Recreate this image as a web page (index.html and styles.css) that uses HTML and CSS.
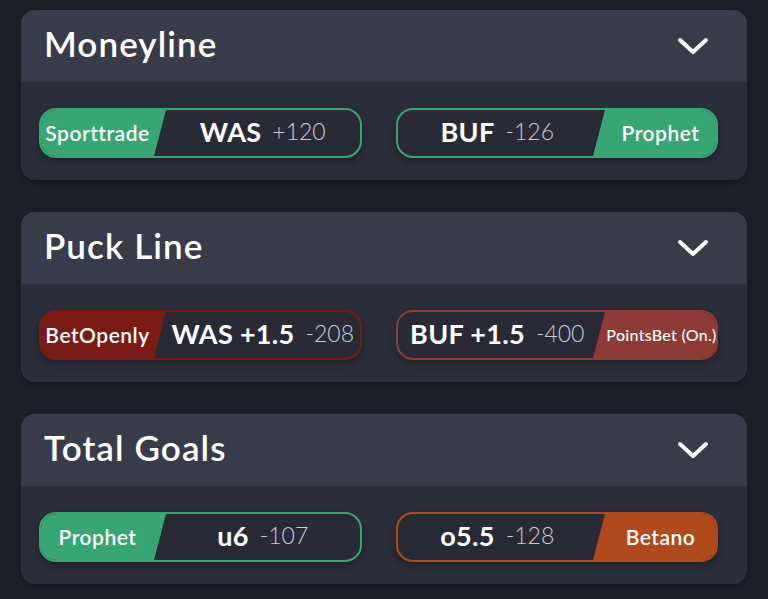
FILE: index.html
```html
<!DOCTYPE html>
<html lang="en">
<head>
    <meta charset="UTF-8">
    <meta name="viewport" content="width=device-width, initial-scale=1.0">
    <title>Markets</title>
    <link rel="stylesheet" href="styles.css">
</head>
<body>
    <div class="market">
        <div class="market-header">
            <h2>Moneyline</h2>
            <svg class="chevron" viewBox="0 0 32 18"><polyline points="3,3 16,15 29,3"/></svg>
        </div>
        <div class="market-body">
            <div class="bet left green">
                <div class="book">Sporttrade</div>
                <div class="line"><b>WAS</b><span>+120</span></div>
            </div>
            <div class="bet right green">
                <div class="line"><b>BUF</b><span>-126</span></div>
                <div class="book">Prophet</div>
            </div>
        </div>
    </div>

    <div class="market">
        <div class="market-header">
            <h2>Puck Line</h2>
            <svg class="chevron" viewBox="0 0 32 18"><polyline points="3,3 16,15 29,3"/></svg>
        </div>
        <div class="market-body">
            <div class="bet left betopenly">
                <div class="book">BetOpenly</div>
                <div class="line"><b>WAS +1.5</b><span>-208</span></div>
            </div>
            <div class="bet right pointsbet">
                <div class="line"><b>BUF +1.5</b><span>-400</span></div>
                <div class="book small">PointsBet (On.)</div>
            </div>
        </div>
    </div>

    <div class="market">
        <div class="market-header">
            <h2>Total Goals</h2>
            <svg class="chevron" viewBox="0 0 32 18"><polyline points="3,3 16,15 29,3"/></svg>
        </div>
        <div class="market-body">
            <div class="bet left green">
                <div class="book">Prophet</div>
                <div class="line"><b>u6</b><span>-107</span></div>
            </div>
            <div class="bet right betano">
                <div class="line"><b>o5.5</b><span>-128</span></div>
                <div class="book">Betano</div>
            </div>
        </div>
    </div>
</body>
</html>
```

FILE: styles.css
```css
body {
    font-family: Lato, "Open Sans", sans-serif;
    margin: 0;
    padding: 10px 21px 0;
    background-color: #1d2029;
    color: #fff;
}
.market {
    border-radius: 14px;
    overflow: hidden;
    margin-bottom: 32px;
    background-color: #2b2f3b;
    box-shadow: 0 2px 6px rgba(0, 0, 0, 0.35);
}
.market-header {
    height: 72px;
    display: flex;
    align-items: center;
    justify-content: space-between;
    padding: 0 38px 0 23px;
    background-color: #383c4a;
}
.market-header h2 {
    margin: 0 0 6px;
    font-size: 35px;
    font-weight: 600;
    letter-spacing: 1.1px;
}
.chevron {
    width: 32px;
    height: 18px;
    fill: none;
    stroke: #fff;
    stroke-width: 4;
    stroke-linecap: round;
    stroke-linejoin: round;
}
.market-body {
    display: flex;
    gap: 34px;
    padding: 26px 29px 22px 18px;
}
.bet {
    flex: 1;
    height: 50px;
    box-sizing: border-box;
    border: 2px solid;
    border-radius: 17px;
    display: flex;
    overflow: hidden;
    background-color: #282b36;
    box-shadow: 0 4px 8px rgba(0, 0, 0, 0.3);
}
.book {
    width: 127px;
    flex-shrink: 0;
    box-sizing: border-box;
    display: flex;
    align-items: center;
    justify-content: center;
    padding-bottom: 2px;
    font-size: 21px;
    font-weight: 600;
    letter-spacing: 0.5px;
}
.left .book {
    margin-left: -2px;
    padding-right: 10px;
    clip-path: polygon(0 0, 100% 0, calc(100% - 12px) 100%, 0 100%);
}
.right .book {
    width: 125px;
    padding-left: 10px;
    margin-right: -2px;
    clip-path: polygon(12px 0, 100% 0, 100% 100%, 0 100%);
}
.book.small {
    font-size: 16px;
    font-weight: 500;
    letter-spacing: 0.3px;
    padding-left: 12px;
}
.line {
    flex: 1;
    display: flex;
    align-items: center;
    justify-content: center;
    gap: 11px;
    padding-bottom: 4px;
}
.right .line {
    padding-left: 4px;
}
.line b {
    font-size: 27px;
    font-weight: 700;
    letter-spacing: 0.3px;
}
.line span {
    font-size: 23px;
    font-weight: 300;
    color: #c8cad2;
}
.green {
    border-color: #38a673;
}
.green .book {
    background-color: #38a673;
}
.betopenly {
    border-color: #7a1c13;
}
.betopenly .book {
    background-color: #7a1c13;
}
.pointsbet {
    border-color: #8e3a35;
}
.pointsbet .book {
    background-color: #8e3a35;
}
.betano {
    border-color: #b04a1a;
}
.betano .book {
    background-color: #b04a1a;
}
```
